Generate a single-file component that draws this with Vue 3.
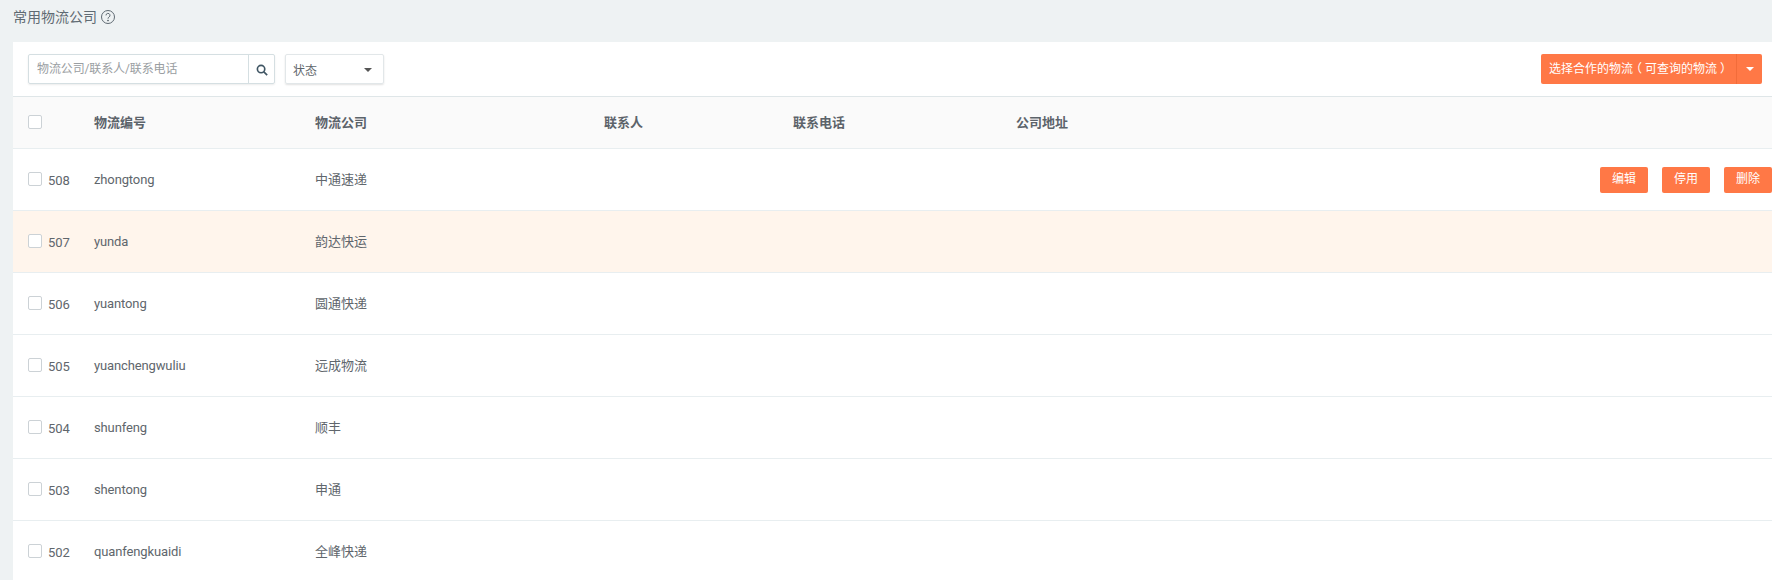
<script setup>
const rows = [
  { id: 508, code: 'zhongtong', name: '中通速递', actions: true },
  { id: 507, code: 'yunda', name: '韵达快运', hover: true },
  { id: 506, code: 'yuantong', name: '圆通快递' },
  { id: 505, code: 'yuanchengwuliu', name: '远成物流' },
  { id: 504, code: 'shunfeng', name: '顺丰' },
  { id: 503, code: 'shentong', name: '申通' },
  { id: 502, code: 'quanfengkuaidi', name: '全峰快递' },
]
</script>

<template>
  <div class="page">
    <div class="title">
      <span>常用物流公司</span>
      <svg class="help" width="16" height="16" viewBox="0 0 16 16" fill="none" stroke="#5f6a72">
        <circle cx="8" cy="8" r="6.5" />
        <path d="M6 6.4a2 2 0 1 1 3 1.7c-.7.4-1 .8-1 1.6" />
        <circle cx="8" cy="11.6" r=".5" fill="#5f6a72" />
      </svg>
    </div>
    <div class="panel">
      <div class="toolbar">
        <div class="search">
          <input class="search-input" placeholder="物流公司/联系人/联系电话" />
          <div class="search-btn">
            <svg width="12" height="12" viewBox="0 0 13 13" fill="none" stroke="#3f5563" stroke-width="1.8">
              <circle cx="5.5" cy="5.5" r="4" />
              <path d="M8.5 8.5l3.6 3.6" />
            </svg>
          </div>
        </div>
        <div class="select">
          <span>状态</span>
          <i class="caret dark"></i>
        </div>
        <div class="split">
          <div class="split-main">选择合作的物流<span class="p-open">（</span>可查询的物流<span class="p-close">）</span></div>
          <div class="split-caret"><i class="caret"></i></div>
        </div>
      </div>
      <div class="row head">
        <div class="c1"><span class="check"></span></div>
        <div class="c2">物流编号</div>
        <div class="c3">物流公司</div>
        <div class="c4">联系人</div>
        <div class="c5">联系电话</div>
        <div class="c6">公司地址</div>
      </div>
      <div v-for="r in rows" :key="r.id" class="row body" :class="{ hover: r.hover }">
        <div class="c1"><span class="check"></span><span class="num">{{ r.id }}</span></div>
        <div class="c2">{{ r.code }}</div>
        <div class="c3 cjk">{{ r.name }}</div>
        <div class="c4"></div>
        <div class="c5"></div>
        <div class="c6 actions">
          <template v-if="r.actions">
            <span class="btn">编辑</span>
            <span class="btn">停用</span>
            <span class="btn">删除</span>
          </template>
        </div>
      </div>
    </div>
  </div>
</template>

<style>
html, body { margin: 0; background: #eef2f3; overflow: hidden; }
</style>

<style scoped>
.page {
  width: 1772px;
  height: 580px;
  overflow: hidden;
  background: #eef2f3;
  font-family: Roboto, "Noto Sans CJK SC", sans-serif;
  font-size: 13px;
  color: #60666c;
}
.title {
  height: 42px;
  box-sizing: border-box;
  padding: 8px 0 0 13px;
  display: flex;
  align-items: flex-start;
  gap: 3px;
  font-size: 14px;
  line-height: 19px;
  color: #5f6a72;
}
.help { margin-top: 1px; }
.panel { margin-left: 13px; background: #fff; }
.toolbar {
  height: 55px;
  box-sizing: border-box;
  padding: 12px 10px 0 15px;
  display: flex;
  align-items: flex-start;
  border-bottom: 1px solid #dfe6e8;
}
.search {
  width: 247px;
  height: 30px;
  box-sizing: border-box;
  display: flex;
  border: 1px solid #d5dfe2;
  border-radius: 2px;
  box-shadow: 0 1px 2px rgba(0, 0, 0, .08);
}
.search-input {
  flex: 1;
  min-width: 0;
  border: 0;
  outline: 0;
  padding: 0 8px;
  font: inherit;
  font-size: 12px;
  letter-spacing: -.12px;
  color: #666;
  background: transparent;
}
.search-input::placeholder { color: #9a9ea2; opacity: 1; }
.search-btn {
  width: 26px;
  box-sizing: border-box;
  padding-top: 2px;
  border-left: 1px solid #d5dfe2;
  display: flex;
  align-items: center;
  justify-content: center;
}
.select {
  width: 99px;
  height: 30px;
  box-sizing: border-box;
  margin-left: 10px;
  padding: 0 11px 0 7px;
  display: flex;
  align-items: center;
  justify-content: space-between;
  border: 1px solid #e2e7e9;
  border-radius: 2px;
  box-shadow: 0 1px 2px rgba(0, 0, 0, .12);
  font-size: 12px;
  color: #60666c;
}
.caret {
  display: block;
  width: 0;
  height: 0;
  border-left: 4px solid transparent;
  border-right: 4px solid transparent;
  border-top: 4px solid #fff;
}
.caret.dark { border-top-color: #555; margin-top: 1px; }
.split {
  margin-left: auto;
  display: flex;
  height: 30px;
  color: #fff;
  font-size: 12px;
}
.split-main {
  width: 196px;
  box-sizing: border-box;
  padding-left: 8px;
  line-height: 30px;
  background: #ff7846;
  border-radius: 2px 0 0 2px;
  border-right: 1px solid #f26c3a;
  white-space: nowrap;
}
.p-open, .p-close { display: inline-block; }
.p-open { transform: translateX(-3px); }
.p-close { transform: translateX(3px); }
.split-caret {
  width: 25px;
  display: flex;
  align-items: center;
  justify-content: center;
  background: #ff7846;
  border-radius: 0 2px 2px 0;
}
.row {
  display: grid;
  grid-template-columns: 81px 221px 289px 189px 223px 1fr;
  align-items: center;
  box-sizing: border-box;
  border-bottom: 1px solid #e8eef0;
}
.head {
  height: 52px;
  background: #fafafa;
  font-weight: 700;
  font-size: 13px;
  color: #5c636a;
}
.head > div:not(.c1) { padding-bottom: 3px; }
.body { height: 62px; font-size: 13px; }
.body .c2 { letter-spacing: -.13px; }
.cjk { padding-bottom: 3px; }
.hover { background: #fff5ec; }
.c1 {
  padding-left: 15px;
  display: flex;
  align-items: center;
}
.check {
  display: block;
  width: 14px;
  height: 14px;
  margin-top: -2px;
  box-sizing: border-box;
  border: 1px solid #ccd2d6;
  border-radius: 2px;
  background: #fff;
}
.num { margin-left: 6px; font-size: 13px; padding-top: 1px; }
.actions {
  display: flex;
  justify-content: flex-end;
  gap: 14px;
}
.btn {
  width: 48px;
  height: 26px;
  line-height: 25px;
  text-align: center;
  background: #ff7846;
  color: #fff;
  font-size: 12px;
  border-radius: 2px;
}
</style>
